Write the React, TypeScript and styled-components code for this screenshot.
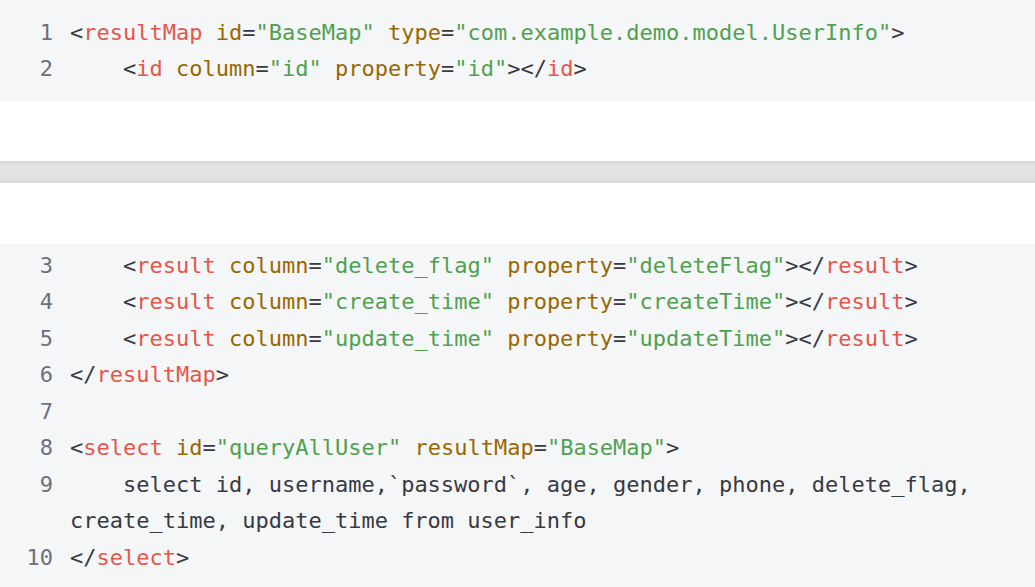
import React from "react";
import styled, { createGlobalStyle } from "styled-components";

const Global = createGlobalStyle`
  html, body { margin: 0; padding: 0; background: #ffffff; }
  body { font-family: "DejaVu Sans Mono", monospace; overflow: hidden; }
`;

const Page = styled.div`
  width: 1035px;
  height: 587px;
  overflow: hidden;
  display: flex;
  flex-direction: column;
`;

const CodeBlock = styled.div<{ $top: number; $bottom: number }>`
  background: #f5f6f8;
  padding: ${(p) => p.$top}px 20px ${(p) => p.$bottom}px 0;
  font-family: "DejaVu Sans Mono", monospace;
  font-size: 22px;
  line-height: 36.45px;
  color: #383a42;
  flex-shrink: 0;
`;

const Row = styled.div`
  display: grid;
  grid-template-columns: 53px 1fr;
  column-gap: 17px;
`;

const LineNo = styled.span`
  text-align: right;
  color: #6b717c;
`;

const Code = styled.span`
  white-space: pre-wrap;
  word-break: normal;
`;

const Tag = styled.span`
  color: #e45649;
`;
const Attr = styled.span`
  color: #986801;
`;
const Str = styled.span`
  color: #50a14f;
`;

const WhiteGap = styled.div<{ $h: number }>`
  height: ${(p) => p.$h}px;
  background: #ffffff;
  flex-shrink: 0;
`;

const PageBreak = styled.div`
  height: 22px;
  flex-shrink: 0;
  background: linear-gradient(
    to bottom,
    #d6d6d6 0%,
    #e2e2e2 25%,
    #e5e5e5 50%,
    #e2e2e2 80%,
    #dadada 100%
  );
`;

const Line: React.FC<{ n: number; children?: React.ReactNode }> = ({ n, children }) => (
  <Row>
    <LineNo>{n}</LineNo>
    <Code>{children}</Code>
  </Row>
);

export default function App() {
  return (
    <>
      <Global />
      <Page>
        <CodeBlock $top={15} $bottom={13}>
          <Line n={1}>
            {"<"}
            <Tag>resultMap</Tag> <Attr>id</Attr>=<Str>"BaseMap"</Str> <Attr>type</Attr>=
            <Str>"com.example.demo.model.UserInfo"</Str>
            {">"}
          </Line>
          <Line n={2}>
            {"    <"}
            <Tag>id</Tag> <Attr>column</Attr>=<Str>"id"</Str> <Attr>property</Attr>=<Str>"id"</Str>
            {"></"}
            <Tag>id</Tag>
            {">"}
          </Line>
        </CodeBlock>
        <WhiteGap $h={60} />
        <PageBreak />
        <WhiteGap $h={61} />
        <CodeBlock $top={4} $bottom={20}>
          <Line n={3}>
            {"    <"}
            <Tag>result</Tag> <Attr>column</Attr>=<Str>"delete_flag"</Str> <Attr>property</Attr>=
            <Str>"deleteFlag"</Str>
            {"></"}
            <Tag>result</Tag>
            {">"}
          </Line>
          <Line n={4}>
            {"    <"}
            <Tag>result</Tag> <Attr>column</Attr>=<Str>"create_time"</Str> <Attr>property</Attr>=
            <Str>"createTime"</Str>
            {"></"}
            <Tag>result</Tag>
            {">"}
          </Line>
          <Line n={5}>
            {"    <"}
            <Tag>result</Tag> <Attr>column</Attr>=<Str>"update_time"</Str> <Attr>property</Attr>=
            <Str>"updateTime"</Str>
            {"></"}
            <Tag>result</Tag>
            {">"}
          </Line>
          <Line n={6}>
            {"</"}
            <Tag>resultMap</Tag>
            {">"}
          </Line>
          <Line n={7}>{" "}</Line>
          <Line n={8}>
            {"<"}
            <Tag>select</Tag> <Attr>id</Attr>=<Str>"queryAllUser"</Str> <Attr>resultMap</Attr>=
            <Str>"BaseMap"</Str>
            {">"}
          </Line>
          <Line n={9}>
            {
              "    select id, username,`password`, age, gender, phone, delete_flag, create_time, update_time from user_info"
            }
          </Line>
          <Line n={10}>
            {"</"}
            <Tag>select</Tag>
            {">"}
          </Line>
        </CodeBlock>
      </Page>
    </>
  );
}
